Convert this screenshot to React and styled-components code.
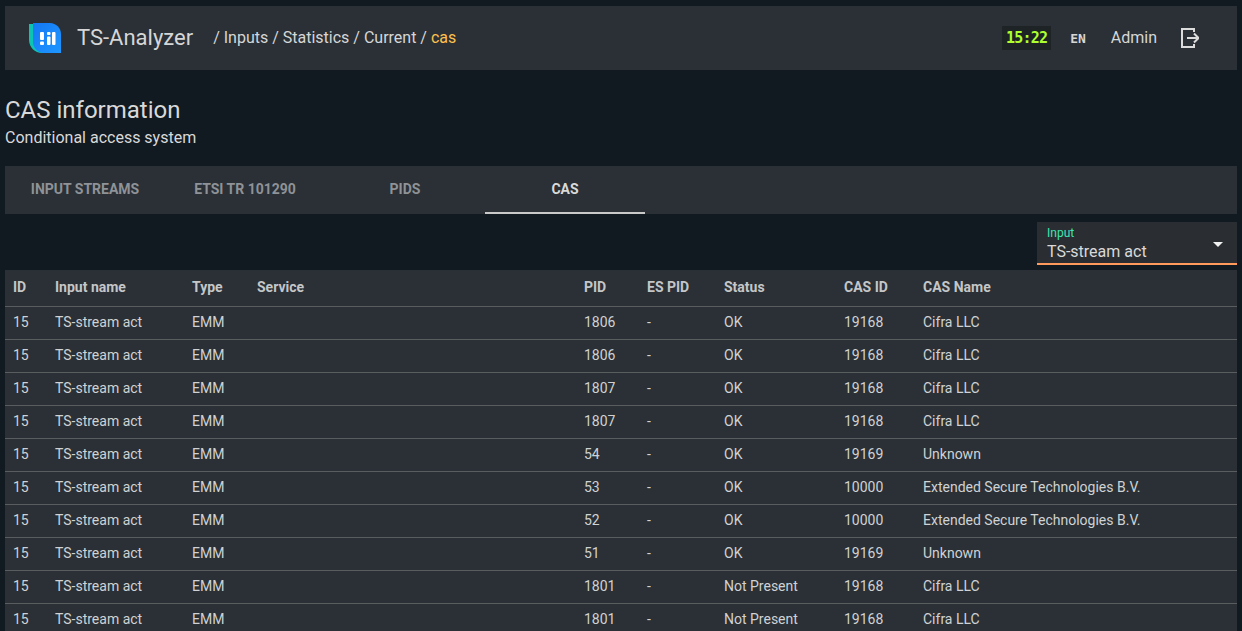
import React from 'react';
import styled, { createGlobalStyle } from 'styled-components';

const GlobalStyle = createGlobalStyle`
  html, body {
    margin: 0;
    padding: 0;
    height: 100%;
    overflow: hidden;
    background: #121a21;
    color: #d9d9d9;
    font-family: Roboto, "Liberation Sans", sans-serif;
  }
`;

const Page = styled.div`
  padding: 6px 5px 0;
`;

const Header = styled.header`
  display: flex;
  align-items: center;
  height: 64px;
  padding: 0 38px 0 24px;
  background: #2a3036;
`;

const Logo = styled.svg`
  width: 32px;
  height: 30px;
`;

const Brand = styled.div`
  margin: 0 0 2px 16px;
  font-size: 22px;
  color: #d6d6d6;
`;

const Crumbs = styled.div`
  margin: 0 0 2px 20px;
  font-size: 16px;
  color: #d6d6d6;
`;

const Current = styled.span`
  color: #ffc04d;
`;

const HeaderRight = styled.div`
  display: flex;
  align-items: center;
  margin-left: auto;
`;

const Clock = styled.div`
  display: flex;
  align-items: center;
  justify-content: center;
  width: 49px;
  height: 24px;
  background: #1e2426;
  color: #adff2f;
  font-family: "DejaVu Sans Mono", monospace;
  font-size: 15px;
  font-weight: bold;
  letter-spacing: -0.8px;
`;

const Lang = styled.div`
  margin-left: 19px;
  font-family: "DejaVu Sans Mono", monospace;
  font-size: 13px;
  font-weight: bold;
  color: #d6d6d6;
`;

const User = styled.div`
  margin: 0 0 2px 25px;
  font-size: 16px;
  color: #d6d6d6;
`;

const LogoutIcon = styled.svg`
  width: 18px;
  height: 20px;
  margin-left: 24px;
`;

const Title = styled.h1`
  margin: 25px 0 0;
  font-size: 24px;
  line-height: 30px;
  font-weight: 400;
  color: #d9d9d9;
`;

const Subtitle = styled.div`
  margin-top: 3px;
  font-size: 16px;
  line-height: 20px;
  color: #d9d9d9;
`;

const Tabs = styled.nav`
  display: flex;
  height: 48px;
  margin-top: 18px;
  background: #2a3036;
`;

const Tab = styled.div`
  display: flex;
  align-items: center;
  justify-content: center;
  width: 160px;
  box-sizing: border-box;
  font-size: 14px;
  font-weight: 700;
  text-transform: uppercase;
  color: ${p => (p.$active ? '#d9d9d9' : '#8f9296')};
  border-bottom: 2px solid ${p => (p.$active ? '#c9c9c9' : 'transparent')};
`;

const FilterRow = styled.div`
  display: flex;
  justify-content: flex-end;
  margin-top: 8px;
`;

const Select = styled.div`
  position: relative;
  width: 200px;
  height: 43px;
  box-sizing: border-box;
  padding: 4px 10px 0;
  background: #2a2e33;
  border-bottom: 2px solid #ff9a5c;
`;

const SelectLabel = styled.div`
  font-size: 12px;
  line-height: 14px;
  color: #3ee6b0;
`;

const SelectValue = styled.div`
  margin-top: 2px;
  font-size: 16px;
  line-height: 20px;
  color: #d9d9d9;
`;

const Caret = styled.span`
  position: absolute;
  right: 14px;
  top: 20px;
  border-left: 5px solid transparent;
  border-right: 5px solid transparent;
  border-top: 5px solid #f2f2f2;
`;

const Table = styled.table`
  width: 100%;
  margin-top: 5px;
  border-collapse: collapse;
  table-layout: fixed;
  background: #2a3036;
  font-size: 14px;
`;

const HeadCell = styled.th`
  height: 36px;
  padding: 0 8px 2px;
  box-sizing: border-box;
  text-align: left;
  font-weight: 700;
  color: #c4c6c8;
  border-bottom: 1px solid #5a5d60;
`;

const Cell = styled.td`
  height: 33px;
  padding: 0 8px 2px;
  box-sizing: border-box;
  color: #d0d2d3;
  border-bottom: 1px solid #5a5d60;
`;

const columns = [
  ['ID', 42],
  ['Input name', 137],
  ['Type', 65],
  ['Service', 327],
  ['PID', 63],
  ['ES PID', 77],
  ['Status', 120],
  ['CAS ID', 79],
  ['CAS Name', 322],
];

const rows = [
  ['1806', 'OK', '19168', 'Cifra LLC'],
  ['1806', 'OK', '19168', 'Cifra LLC'],
  ['1807', 'OK', '19168', 'Cifra LLC'],
  ['1807', 'OK', '19168', 'Cifra LLC'],
  ['54', 'OK', '19169', 'Unknown'],
  ['53', 'OK', '10000', 'Extended Secure Technologies B.V.'],
  ['52', 'OK', '10000', 'Extended Secure Technologies B.V.'],
  ['51', 'OK', '19169', 'Unknown'],
  ['1801', 'Not Present', '19168', 'Cifra LLC'],
  ['1801', 'Not Present', '19168', 'Cifra LLC'],
];

function App() {
  return (
    <Page>
      <GlobalStyle />
      <Header>
        <Logo viewBox="0 0 32 30">
          <defs>
            <linearGradient id="logoBlue" x1="0" y1="0" x2="1" y2="1">
              <stop offset="0" stopColor="#1478f5" />
              <stop offset="1" stopColor="#1e96ff" />
            </linearGradient>
          </defs>
          <path d="M0 1h8v23l8 6h-3C6 30 0 24 0 17z" fill="#0cc4b4" />
          <path d="M4 0h17c6 0 11 5 11 11v19H15C9 30 4 25 4 19z" fill="url(#logoBlue)" />
          <g fill="#fff">
            <rect x="11" y="9" width="4" height="8" rx="1" />
            <rect x="11" y="18.500" width="4" height="3.500" rx="1" />
            <rect x="18" y="9" width="3.500" height="3" rx="1" />
            <rect x="18" y="13.500" width="3.500" height="8.500" rx="1" />
            <rect x="23" y="9" width="3.500" height="13" rx="1" />
          </g>
        </Logo>
        <Brand>TS-Analyzer</Brand>
        <Crumbs>
          / Inputs / Statistics / Current / <Current>cas</Current>
        </Crumbs>
        <HeaderRight>
          <Clock>15:22</Clock>
          <Lang>EN</Lang>
          <User>Admin</User>
          <LogoutIcon viewBox="0 0 18 20" fill="none" stroke="#dcdcdc" strokeWidth="2">
            <path d="M13 4V1H1v18h12v-3" />
            <path d="M6 10h11M13 5.500l4.500 4.500-4.500 4.500" />
          </LogoutIcon>
        </HeaderRight>
      </Header>
      <Title>CAS information</Title>
      <Subtitle>Conditional access system</Subtitle>
      <Tabs>
        <Tab>Input streams</Tab>
        <Tab>ETSI TR 101290</Tab>
        <Tab>PIDs</Tab>
        <Tab $active>CAS</Tab>
      </Tabs>
      <FilterRow>
        <Select>
          <SelectLabel>Input</SelectLabel>
          <SelectValue>TS-stream act</SelectValue>
          <Caret />
        </Select>
      </FilterRow>
      <Table>
        <colgroup>
          {columns.map(([name, width]) => (
            <col key={name} width={width} />
          ))}
        </colgroup>
        <thead>
          <tr>
            {columns.map(([name]) => (
              <HeadCell key={name}>{name}</HeadCell>
            ))}
          </tr>
        </thead>
        <tbody>
          {rows.map(([pid, status, casId, casName], i) => (
            <tr key={i}>
              <Cell>15</Cell>
              <Cell>TS-stream act</Cell>
              <Cell>EMM</Cell>
              <Cell />
              <Cell>{pid}</Cell>
              <Cell>-</Cell>
              <Cell>{status}</Cell>
              <Cell>{casId}</Cell>
              <Cell>{casName}</Cell>
            </tr>
          ))}
        </tbody>
      </Table>
    </Page>
  );
}

export default App;
